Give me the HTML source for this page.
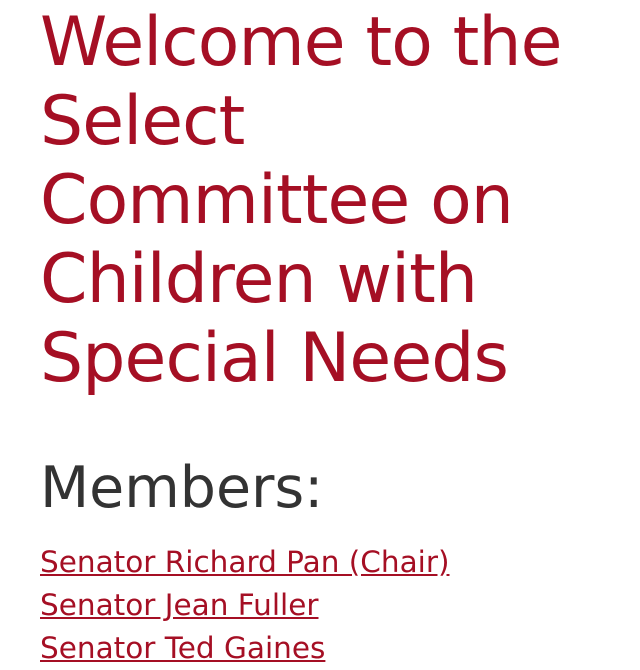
<!DOCTYPE html>
<html><head><meta charset="utf-8"><style>
html,body{margin:0;padding:0;background:#fff;width:640px;height:640px;overflow:hidden}
body{font-family:"DejaVu Sans","Liberation Sans",sans-serif}
h1{position:absolute;left:40px;top:3px;margin:0;font-weight:normal;color:#a50f24;font-size:68px;line-height:79px;letter-spacing:-0.9px;width:590px}
h2{position:absolute;left:40px;top:453px;margin:0;font-weight:normal;color:#333;font-size:57px;line-height:70px}
.links{position:absolute;left:40px;top:541px;font-size:29.5px;line-height:43px}
.links a{color:#a50f24;text-decoration:underline;display:block;white-space:nowrap}
</style></head><body>
<h1>Welcome to the Select Committee on Children with Special Needs</h1>
<h2>Members:</h2>
<div class="links">
<a>Senator Richard Pan (Chair)</a>
<a>Senator Jean Fuller</a>
<a>Senator Ted Gaines</a>
</div>
</body></html>
